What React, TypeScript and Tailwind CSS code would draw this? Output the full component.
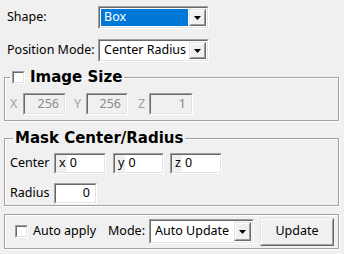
import React from "react";

function Sunken({ className = "", inner = "", children }: { className?: string; inner?: string; children?: React.ReactNode }) {
  return (
    <div className={`border border-t-[#a0a0a0] border-l-[#a0a0a0] border-b-white border-r-white ${className}`}>
      <div className={`h-full border border-t-[#696969] border-l-[#696969] border-b-[#e3e3e3] border-r-[#e3e3e3] ${inner}`}>
        {children}
      </div>
    </div>
  );
}

function Raised({ className = "", children }: { className?: string; children?: React.ReactNode }) {
  return (
    <div className={`border border-t-[#e3e3e3] border-l-[#e3e3e3] border-b-[#696969] border-r-[#696969] bg-[#f0f0f0] ${className}`}>
      <div className="h-full flex items-center justify-center border border-t-white border-l-white border-b-[#a0a0a0] border-r-[#a0a0a0]">
        {children}
      </div>
    </div>
  );
}

function Combo({ value, selected = false, className = "" }: { value: string; selected?: boolean; className?: string }) {
  return (
    <Sunken className={className} inner="flex bg-white p-px">
      <div className={`flex-1 flex items-center pl-[3px] ${selected ? "bg-[#0078d7] text-white" : "text-black"}`}>{value}</div>
      <Raised className="w-[17px] ml-px">
        <svg width="7" height="4" viewBox="0 0 7 4">
          <polygon points="0,0 7,0 3.5,4" fill="#000" />
        </svg>
      </Raised>
    </Sunken>
  );
}

function CheckBox({ className = "" }: { className?: string }) {
  return (
    <Sunken className={`w-[13px] h-[13px] ${className}`} inner="bg-white" />
  );
}

function DisabledField({ value, className = "" }: { value: string; className?: string }) {
  return (
    <Sunken className={`h-[22px] ${className}`} inner="flex items-center justify-end pr-[5px] text-[#8a8a8a]">
      {value}
    </Sunken>
  );
}

function PrefixField({ prefix, value, className = "" }: { prefix: string; value: string; className?: string }) {
  return (
    <Sunken className={`h-[21px] ${className}`} inner="flex">
      <div className="flex items-center pl-[3px] pr-[1px] bg-[#f0f0f0]">{prefix}</div>
      <div className="flex-1 flex items-center pl-[3px] bg-white">{value}</div>
    </Sunken>
  );
}

export default function App() {
  return (
    <div
      className="w-[344px] h-[254px] bg-[#f0f0f0] text-black text-[12.5px] leading-none overflow-hidden"
      style={{ fontFamily: '"Noto Sans", "Open Sans", sans-serif' }}
    >
      <div className="flex items-center h-[23px] mt-[6px] pl-[7px]">
        <span className="w-[91px]">Shape:</span>
        <Combo value="Box" selected className="w-[111px] h-[23px]" />
      </div>
      <div className="flex items-center h-[23px] mt-[10px] pl-[7px]">
        <span className="w-[91px]">Position Mode:</span>
        <Combo value="Center Radius" className="w-[111px] h-[23px]" />
      </div>

      <fieldset className="mx-[4px] w-[335px] mt-[6px] border border-[#a0a0a0] shadow-[inset_1px_1px_0_#fff,1px_1px_0_#fff] pl-[5px] pb-[5px] pt-[7px]">
        <legend className="ml-0 px-[2px] h-[18px] flex items-center">
          <CheckBox className="mr-[5px]" />
          <span className="font-bold text-[15px] text-black" style={{ fontFamily: '"DejaVu Sans", Verdana, sans-serif' }}>
            Image Size
          </span>
        </legend>
        <div className="flex items-center text-[#a0a0a0]">
          <span className="w-[13px]">X</span>
          <DisabledField value="256" className="w-[43px]" />
          <span className="w-[12px] ml-[8px]">Y</span>
          <DisabledField value="256" className="w-[42px]" />
          <span className="w-[11px] ml-[10px]">Z</span>
          <DisabledField value="1" className="w-[44px]" />
        </div>
      </fieldset>

      <fieldset className="mx-[4px] w-[335px] mt-[8px] border border-[#a0a0a0] shadow-[inset_1px_1px_0_#fff,1px_1px_0_#fff] pl-[5px] pb-[1px] pt-[6px]">
        <legend className="ml-[3px] px-[2px] h-[18px] flex items-center">
          <span className="font-bold text-[15px] text-black" style={{ fontFamily: '"DejaVu Sans", Verdana, sans-serif' }}>
            Mask Center/Radius
          </span>
        </legend>
        <div className="flex items-center">
          <span className="w-[44px]">Center</span>
          <PrefixField prefix="x" value="0" className="w-[52px]" />
          <PrefixField prefix="y" value="0" className="w-[51px] ml-[7px]" />
          <PrefixField prefix="z" value="0" className="w-[52px] ml-[6px]" />
        </div>
        <div className="flex items-center mt-[9px]">
          <span className="w-[44px]">Radius</span>
          <Sunken className="w-[43px] h-[21px]" inner="flex items-center justify-end pr-[5px] bg-white">
            0
          </Sunken>
        </div>
      </fieldset>

      <div className="mx-[4px] w-[335px] mt-[8px] h-[35px] border border-[#a0a0a0] shadow-[inset_1px_1px_0_#fff,1px_1px_0_#fff] flex items-center pl-[10px]">
        <CheckBox className="mr-[5px]" />
        <span>Auto apply</span>
        <span className="ml-[12px] mr-[4px]">Mode:</span>
        <Combo value="Auto Update" className="w-[105px] h-[25px]" />
        <Raised className="w-[74px] h-[28px] ml-[6px]">Update</Raised>
      </div>
    </div>
  );
}
